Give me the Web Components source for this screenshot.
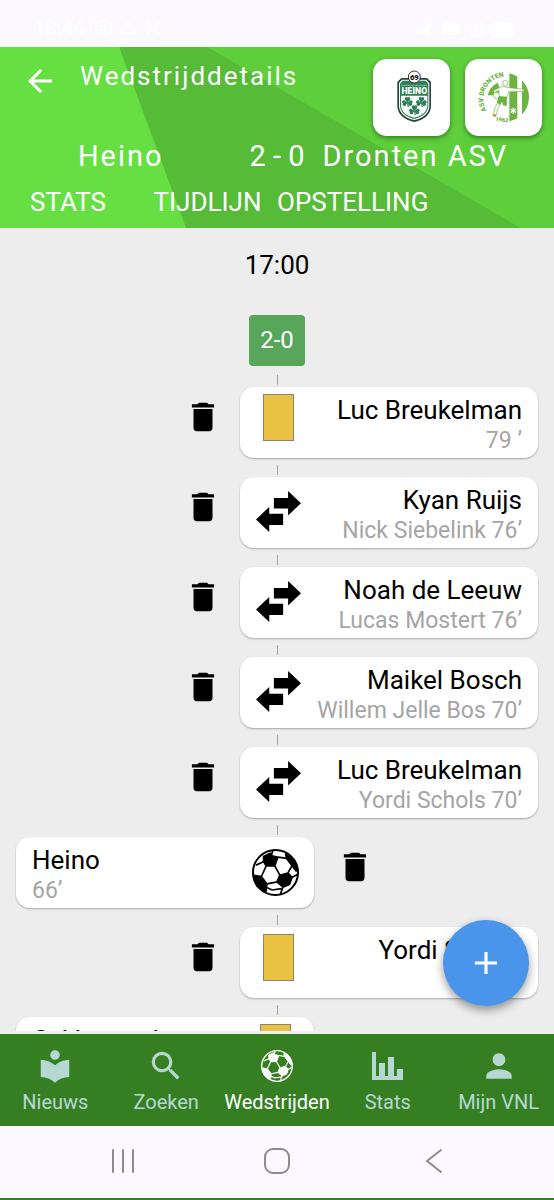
<!DOCTYPE html>
<html lang="nl">
<head>
<meta charset="utf-8">
<meta name="viewport" content="width=device-width, initial-scale=1">
<title>Wedstrijddetails</title>
<style>
    html, body {
        margin: 0;
        padding: 0;
    }
    body {
        font-family: Roboto, "Liberation Sans", sans-serif;
        color: #000;
        background: #fcf8ff;
    }
</style>
</head>
<body>
<match-app></match-app>

<script>
const reset = `
    *, *::before, *::after { box-sizing: border-box; }
    button {
        margin: 0;
        padding: 0;
        border: 0;
        background: none;
        color: inherit;
        font: inherit;
        letter-spacing: inherit;
        cursor: pointer;
    }
    svg { display: block; }
`

const ball = `
    <circle cx="70" cy="70" r="67" fill="none" stroke="currentColor" stroke-width="6"/>
    <g fill="currentColor" stroke="currentColor" stroke-width="4" stroke-linejoin="round">
        <path d="M34 22 54 12 60 20 78 24 68 51 42 51 34 38Z"/>
        <path d="M102 28 100 14 124 30 137 64 131 66 119 50Z"/>
        <path d="M82 78 107 71 120 84 112 106 92 114 74 98Z"/>
        <path d="M4 78 28 82 45 104 42 126 36 128 14 110Z"/>
    </g>
    <g fill="none" stroke="currentColor" stroke-width="5">
        <path d="M42 51 28 82M68 51 83 78M78 24 103 28M119 50 107 71M120 84 135 76M45 104 75 98M92 114 84 136M34 38 12 48M58 18 62 4M42 114 60 122 88 118"/>
    </g>
`

const icons = {
    ball: ['0 0 140 140', ball],
    swap: ['0 0 136 124', '<path d="M97 0 136 37 97 74V53H54V21H97ZM82 69V103H40V124L0 86 40 48V69Z"/>'],
    trash: ['0 0 24 24', '<path d="M6 19c0 1.1.9 2 2 2h8c1.1 0 2-.9 2-2V7H6v12zM19 4h-3.5l-1-1h-5l-1 1H5v2h14V4z"/>'],
    news: ['0 0 24 24', '<path d="M12 11.55C9.64 9.35 6.48 8 3 8v11c3.48 0 6.64 1.35 9 3.55 2.36-2.19 5.52-3.55 9-3.55V8c-3.48 0-6.64 1.35-9 3.55zM12 8c1.66 0 3-1.34 3-3s-1.34-3-3-3-3 1.34-3 3 1.34 3 3 3z"/>'],
    search: ['0 0 24 24', '<path d="M15.5 14h-.79l-.28-.27A6.471 6.471 0 0 0 16 9.5 6.5 6.5 0 1 0 9.5 16c1.61 0 3.09-.59 4.23-1.57l.27.28v.79l5 4.99L20.49 19l-4.99-5zm-6 0C7.01 14 5 11.99 5 9.5S7.01 5 9.5 5 14 7.01 14 9.5 11.99 14 9.5 14z"/>'],
    stats: ['0 0 32 32', '<path d="M0 2H4V26H7V13H13V26H16V7H22V26H25V19H31V30H0Z"/>'],
    person: ['0 0 24 24', '<path d="M12 12c2.21 0 4-1.79 4-4s-1.79-4-4-4-4 1.79-4 4 1.79 4 4 4zm0 2c-2.67 0-8 1.34-8 4v2h16v-2c0-2.66-5.33-4-8-4z"/>'],
    back: ['0 0 24 24', '<path d="M20 11H7.83l5.59-5.59L12 4l-8 8 8 8 1.41-1.41L7.83 13H20v-2z"/>'],
    plus: ['0 0 24 24', '<path d="M19 13h-6v6h-2v-6H5v-2h6V5h2v6h6v2z"/>']
}

const clover = `
    <g fill="#2a7f56">
        <circle cx="-3" cy="-12" r="5"/><circle cx="4" cy="-12" r="5"/><path d="M-8 -10H9L0 1Z"/>
        <circle cx="-11" cy="-2" r="5"/><circle cx="-9" cy="5" r="5"/><path d="M-12 -7 1 0 -8 10Z"/>
        <circle cx="11" cy="-2" r="5"/><circle cx="9" cy="5" r="5"/><path d="M12 -7 -1 0 8 10Z"/>
        <path d="M-1 0H1L5 13H1Z"/>
    </g>
`

const crests = {
    heino: ['92 58 118 168', 'Heino', `
        <path d="M120 82H197L209 94V165C209 190 190 207 159 214C128 207 108 190 108 165V94Z" fill="#26443b"/>
        <path d="M122 87H195L204 97V165C204 186 188 202 159 208C130 202 113 186 113 165V97Z" fill="#fff"/>
        <path d="M124 90H193L201 99V164C201 184 186 199 159 205C131 199 116 184 116 164V99Z" fill="#2a7f56"/>
        <path d="M119 135H198V164C198 182 184 195 159 201C133 195 119 182 119 164Z" fill="#fff"/>
        <path d="M120 104H197" stroke="#a7cdb9" stroke-width="3" stroke-dasharray="3 1"/>
        <text x="159" y="131" text-anchor="middle" font-size="26" font-weight="900" fill="#fff">HEINO</text>
        <g transform="translate(138 156)">${clover}</g>
        <g transform="translate(180 156)">${clover}</g>
        <g transform="translate(159 181)">${clover}</g>
        <circle cx="159" cy="79" r="18" fill="#fff" stroke="#333" stroke-width="3"/>
        <text x="159" y="87" text-anchor="middle" font-size="23" font-weight="900" fill="#111">69</text>
    `],
    dronten: ['352 62 160 156', 'ASV Dronten', `
        <defs>
            <clipPath id="round"><circle cx="435" cy="138" r="73"/></clipPath>
            <path id="arc" d="M381 177A66 66 0 0 1 452 78"/>
        </defs>
        <g clip-path="url(#round)" fill="#6db33f">
            <path d="M449 60H473V220H449Z"/>
            <path d="M487 60H512V220H487Z"/>
        </g>
        <path d="M384 132A53 53 0 0 1 415 94L424 132Z" fill="#6db33f"/>
        <g fill="#fff" stroke="#6db33f" stroke-width="2">
            <path d="M429 104 440 108 492 114 493 121 447 121 442 138 416 136 418 117 404 125 401 118Z"/>
            <circle cx="437" cy="95" r="8"/>
            <path d="M416 150 424 156 413 174 411 190 401 194 405 173Z"/>
            <circle cx="410" cy="132" r="9"/>
        </g>
        <path d="M418 135 442 137 441 165 430 162 427 151 420 160 411 153Z" fill="#6db33f"/>
        <path d="M399 187 411 190 407 197 400 195Z" fill="#d9893b"/>
        <g stroke="#fff" stroke-width="4"><path d="M461 169V187M453 173 469 183M453 183 469 173"/></g>
        <g fill="#6db33f" font-weight="900">
            <text font-size="20"><textPath href="#arc" startOffset="0">ASV DRONTEN</textPath></text>
            <text x="427" y="211" text-anchor="middle" font-size="17" transform="rotate(5 427 205)">1962</text>
        </g>
    `]
}

class AppIcon extends HTMLElement {
    constructor () {
        super();
        this.attachShadow({ mode: 'open' });
    }
    connectedCallback () {
        const [box, shape] = icons[this.getAttribute('name')];
        this.shadowRoot.innerHTML = `
            <style>
                :host { display: block; width: 24px; flex: none; }
                svg { display: block; width: 100%; height: auto; }
            </style>
            <svg viewBox="${box}" fill="currentColor" aria-hidden="true">${shape}</svg>
        `;
    }
}

class ClubCrest extends HTMLElement {
    constructor () {
        super();
        this.attachShadow({ mode: 'open' });
    }
    connectedCallback () {
        const [box, label, shape] = crests[this.getAttribute('club')];
        this.shadowRoot.innerHTML = `
            <style>
                :host {
                    display: flex;
                    align-items: center;
                    justify-content: center;
                    width: 77px;
                    height: 77px;
                    background: #fff;
                    border-radius: 14px;
                    box-shadow: 0 2px 5px rgba(0, 0, 0, 0.4);
                }
                svg { display: block; height: 56px; overflow: visible; }
                :host([club="dronten"]) svg { height: 52px; }
            </style>
            <svg viewBox="${box}" role="img" aria-label="${label}">${shape}</svg>
        `;
    }
}

class StatusBar extends HTMLElement {
    constructor () {
        super();
        this.attachShadow({ mode: 'open' }).innerHTML = `
            <style>
                ${reset}
                :host {
                    display: flex;
                    justify-content: space-between;
                    align-items: flex-end;
                    height: 47px;
                    padding: 0 34px 7px;
                    color: #fff;
                    font-size: 20px;
                    font-weight: 500;
                    line-height: 24px;
                }
                div { display: flex; gap: 8px; align-items: center; }
            </style>
            <div>
                <span>18:44</span>
                <svg width="84" height="20" viewBox="0 0 84 20" fill="none" stroke="#fff" stroke-width="2">
                    <rect x="3" y="3" width="14" height="14" rx="4"/><path d="M7 8H13V12H7Z"/>
                    <path d="M27 15H43M29 13 35 4 41 13M53 4 67 17M67 4 53 17"/><circle cx="81" cy="10" r="1"/>
                </svg>
            </div>
            <svg width="102" height="20" viewBox="0 0 102 20" fill="#fff">
                <path d="M0 8H5L12 2V18L5 13H0Z"/><rect x="24" y="2" width="18" height="13" rx="2"/>
                <path d="M47 15H50V18H47ZM52 11H55V18H52ZM57 7H60V18H57ZM62 2H65V18H62Z"/>
                <rect x="70" y="2" width="28" height="16" rx="8"/>
            </svg>
        `;
    }
}

class MatchHeader extends HTMLElement {
    constructor () {
        super();
        this.attachShadow({ mode: 'open' }).innerHTML = `
            <style>
                ${reset}
                :host {
                    display: grid;
                    color: #fff;
                    background: #66df43;
                }
                .backdrop, .content { grid-area: 1 / 1; min-width: 0; }
                .backdrop { display: grid; }
                .backdrop i { grid-area: 1 / 1; }
                .shade {
                    background: #56bb37;
                    clip-path: polygon(21.5% 0, 100% 0, 100% 100%, 33.6% 100%);
                }
                .light {
                    background: #5ece3b;
                    clip-path: polygon(37.4% 0, 100% 0, 100% 100%, 94% 100%);
                }
                .content { z-index: 1; }
                .top {
                    display: flex;
                    align-items: flex-start;
                    padding: 12px 12px 0 22px;
                }
                .back { margin-top: 4px; }
                .back app-icon { width: 36px; }
                h1 {
                    flex: 1;
                    margin: 0;
                    padding-left: 22px;
                    font-size: 26px;
                    font-weight: 400;
                    line-height: 34px;
                    letter-spacing: 2px;
                }
                .crests { display: flex; gap: 15px; }
                .score {
                    display: grid;
                    grid-template-columns: 1fr auto 1fr;
                    font-size: 29px;
                    line-height: 40px;
                    letter-spacing: 2px;
                }
                .home { padding-right: 8px; text-align: center; }
                .goals { letter-spacing: 0; }
                .away { padding-left: 18px; white-space: nowrap; }
                nav {
                    display: grid;
                    grid-template-columns: repeat(4, minmax(0, 1fr));
                    padding: 0 30px;
                    font-size: 26px;
                    line-height: 52px;
                }
                nav button { text-align: left; white-space: nowrap; }
            </style>
            <div class="backdrop"><i class="shade"></i><i class="light"></i></div>
            <div class="content">
                <div class="top">
                    <button class="back" aria-label="Terug"><app-icon name="back"></app-icon></button>
                    <h1><slot></slot></h1>
                    <div class="crests">
                        <club-crest club="heino"></club-crest>
                        <club-crest club="dronten"></club-crest>
                    </div>
                </div>
                <div class="score">
                    <span class="home"><slot name="home"></slot></span>
                    <span class="goals"><slot name="goals"></slot></span>
                    <span class="away"><slot name="away"></slot></span>
                </div>
                <nav>
                    <button>STATS</button>
                    <button>TIJDLIJN</button>
                    <button>OPSTELLING</button>
                </nav>
            </div>
        `;
    }
}

class MatchEvent extends HTMLElement {
    constructor () {
        super();
        this.attachShadow({ mode: 'open' });
    }
    connectedCallback () {
        const type = this.getAttribute('type');
        const mark = type === 'card' ? '<i class="booking"></i>' : `<app-icon class="${type}" name="${type}"></app-icon>`;
        this.shadowRoot.innerHTML = `
            <style>
                ${reset}
                :host { display: block; }
                .line {
                    width: 1px;
                    height: 10px;
                    margin: 0 auto 2px;
                    background: #a3a3a3;
                }
                .row {
                    display: flex;
                    align-items: flex-start;
                    gap: 22px;
                    padding: 0 16px;
                    margin-bottom: 7px;
                }
                :host([side="away"]) .row { flex-direction: row-reverse; gap: 18px; }
                .card {
                    display: flex;
                    justify-content: space-between;
                    width: calc(50% + 37px);
                    height: 71px;
                    padding: 7px 16px;
                    background: #fff;
                    border-radius: 14px;
                    box-shadow: 0 1px 2px rgba(0, 0, 0, 0.3);
                }
                :host([side="away"]) .card { flex-direction: row-reverse; }
                .text { white-space: nowrap; }
                :host([side="away"]) .text { text-align: right; }
                .name, .info { display: block; }
                .name { font-size: 26px; line-height: 33px; }
                .info { font-size: 23px; line-height: 28px; color: #a5a5a5; }
                .mark {
                    display: flex;
                    justify-content: center;
                    width: 45px;
                }
                .booking {
                    width: 31px;
                    height: 47px;
                    background: #e9c243;
                    border: 1px solid #8a8474;
                }
                .ball { width: 47px; margin-top: 5px; }
                .swap { width: 45px; margin-top: 7px; }
                .delete { margin-top: 11px; }
                .delete app-icon { width: 38px; }
            </style>
            <div class="line"></div>
            <div class="row">
                <div class="card">
                    <div class="text">
                        <span class="name"><slot></slot></span>
                        <span class="info"><slot name="info"></slot></span>
                    </div>
                    <div class="mark">${mark}</div>
                </div>
                <button class="delete" aria-label="Verwijderen"><app-icon name="trash"></app-icon></button>
            </div>
        `;
    }
}

class TabItem extends HTMLElement {
    constructor () {
        super();
        this.attachShadow({ mode: 'open' });
    }
    connectedCallback () {
        this.shadowRoot.innerHTML = `
            <style>
                ${reset}
                :host { display: block; color: #b5d9d2; }
                :host([active]) { color: #fff; }
                button {
                    display: flex;
                    flex-direction: column;
                    align-items: center;
                    gap: 5px;
                    width: 100%;
                    padding: 13px 0 12px;
                    font-size: 20px;
                    line-height: 24px;
                    white-space: nowrap;
                }
                .slot { display: flex; align-items: center; height: 38px; }
                app-icon { width: 38px; }
                app-icon[name="ball"], app-icon[name="stats"] { width: 32px; }
            </style>
            <button>
                <span class="slot"><app-icon name="${this.getAttribute('icon')}"></app-icon></span>
                <slot></slot>
            </button>
        `;
    }
}

class SystemBar extends HTMLElement {
    constructor () {
        super();
        this.attachShadow({ mode: 'open' }).innerHTML = `
            <style>
                ${reset}
                :host {
                    display: flex;
                    justify-content: space-around;
                    align-items: center;
                    height: 74px;
                    padding: 0 46px 3px;
                    color: #8e8992;
                    border-bottom: 2px solid #357f22;
                }
                svg {
                    fill: none;
                    stroke: currentColor;
                    stroke-width: 2;
                    stroke-linecap: round;
                }
            </style>
            <button aria-label="Recente apps"><svg width="26" height="26"><path d="M3 2V24M13 2V24M23 2V24"/></svg></button>
            <button aria-label="Startscherm"><svg width="26" height="26"><rect x="1" y="1" width="24" height="24" rx="8"/></svg></button>
            <button aria-label="Vorige"><svg width="26" height="26"><path d="M23 2 9 13 23 24"/></svg></button>
        `;
    }
}

class MatchApp extends HTMLElement {
    constructor () {
        super();
        this.attachShadow({ mode: 'open' }).innerHTML = `
            <style>
                ${reset}
                :host {
                    display: flex;
                    flex-direction: column;
                    height: 100vh;
                }
                status-bar, match-header, footer, system-bar { flex: none; }
                main {
                    position: relative;
                    flex: 1;
                    min-height: 0;
                    background: #ededed;
                    border-bottom: 3px solid #eee;
                }
                .timeline { height: 100%; overflow: hidden; }
                .time {
                    margin: 20px 0 32px;
                    font-size: 26px;
                    line-height: 35px;
                    text-align: center;
                }
                .result {
                    width: 56px;
                    margin: 0 auto 9px;
                    font-size: 24px;
                    line-height: 51px;
                    text-align: center;
                    color: #fff;
                    background: #57a65a;
                    border-radius: 4px;
                }
                .add {
                    position: absolute;
                    right: 25px;
                    bottom: 25px;
                    display: flex;
                    align-items: center;
                    justify-content: center;
                    width: 86px;
                    height: 86px;
                    color: #fff;
                    background: #4a95ec;
                    border-radius: 50%;
                    box-shadow: 0 4px 10px rgba(0, 0, 0, 0.4);
                }
                .add app-icon { width: 38px; }
                footer {
                    display: grid;
                    grid-template-columns: repeat(5, 1fr);
                    background: #357f22;
                }
            </style>
            <status-bar></status-bar>
            <match-header>
                Wedstrijddetails
                <span slot="home">Heino</span>
                <span slot="goals">2 - 0</span>
                <span slot="away">Dronten ASV</span>
            </match-header>
            <main>
                <div class="timeline">
                    <div class="time">17:00</div>
                    <div class="result">2-0</div>
                    <match-event side="away" type="card">Luc Breukelman<span slot="info">79 ’</span></match-event>
                    <match-event side="away" type="swap">Kyan Ruijs<span slot="info">Nick Siebelink 76’</span></match-event>
                    <match-event side="away" type="swap">Noah de Leeuw<span slot="info">Lucas Mostert 76’</span></match-event>
                    <match-event side="away" type="swap">Maikel Bosch<span slot="info">Willem Jelle Bos 70’</span></match-event>
                    <match-event side="away" type="swap">Luc Breukelman<span slot="info">Yordi Schols 70’</span></match-event>
                    <match-event side="home" type="ball">Heino<span slot="info">66’</span></match-event>
                    <match-event side="away" type="card">Yordi Schols</match-event>
                    <match-event side="home" type="card">G. Vermeulen</match-event>
                </div>
                <button class="add" aria-label="Toevoegen"><app-icon name="plus"></app-icon></button>
            </main>
            <footer>
                <tab-item icon="news">Nieuws</tab-item>
                <tab-item icon="search">Zoeken</tab-item>
                <tab-item icon="ball" active>Wedstrijden</tab-item>
                <tab-item icon="stats">Stats</tab-item>
                <tab-item icon="person">Mijn VNL</tab-item>
            </footer>
            <system-bar></system-bar>
        `;
    }
}

window.customElements.define('app-icon', AppIcon);
window.customElements.define('club-crest', ClubCrest);
window.customElements.define('status-bar', StatusBar);
window.customElements.define('match-header', MatchHeader);
window.customElements.define('match-event', MatchEvent);
window.customElements.define('tab-item', TabItem);
window.customElements.define('system-bar', SystemBar);
window.customElements.define('match-app', MatchApp);
</script>
</body>
</html>
